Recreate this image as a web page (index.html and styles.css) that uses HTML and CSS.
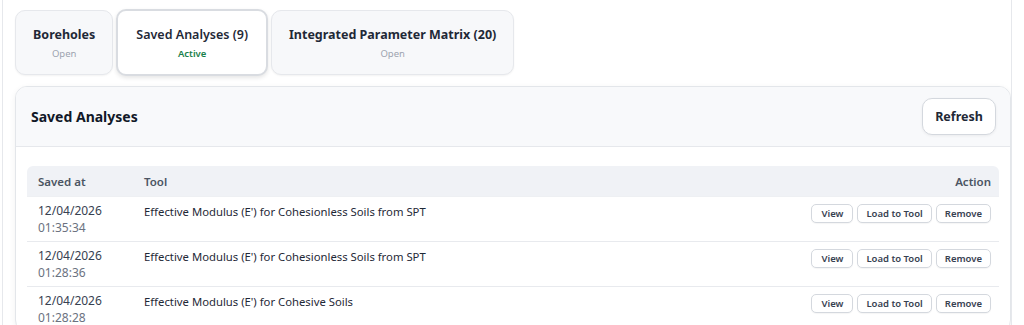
FILE: index.html
```html
<!DOCTYPE html>
<html>
<head>
<meta charset="utf-8">
<link rel="stylesheet" href="styles.css">
</head>
<body>
<div class="frame">
  <div class="tabs">
    <div class="tab">
      <div class="tab-title">Boreholes</div>
      <div class="tab-sub">Open</div>
    </div>
    <div class="tab active">
      <div class="tab-title">Saved Analyses (9)</div>
      <div class="tab-sub">Active</div>
    </div>
    <div class="tab">
      <div class="tab-title">Integrated Parameter Matrix (20)</div>
      <div class="tab-sub">Open</div>
    </div>
  </div>

  <div class="card">
    <div class="card-header">
      <h2 class="card-title">Saved Analyses</h2>
      <button class="btn-refresh">Refresh</button>
    </div>
    <div class="card-body">
      <table class="table">
        <thead>
          <tr>
            <th class="col-date">Saved at</th>
            <th>Tool</th>
            <th class="col-action">Action</th>
          </tr>
        </thead>
        <tbody>
          <tr>
            <td class="col-date"><div class="date">12/04/2026</div><div class="time">01:35:34</div></td>
            <td class="tool">Effective Modulus (E') for Cohesionless Soils from SPT</td>
            <td class="col-action"><div class="actions"><button class="btn-sm btn-view">View</button><button class="btn-sm">Load to Tool</button><button class="btn-sm">Remove</button></div></td>
          </tr>
          <tr>
            <td class="col-date"><div class="date">12/04/2026</div><div class="time">01:28:36</div></td>
            <td class="tool">Effective Modulus (E') for Cohesionless Soils from SPT</td>
            <td class="col-action"><div class="actions"><button class="btn-sm btn-view">View</button><button class="btn-sm">Load to Tool</button><button class="btn-sm">Remove</button></div></td>
          </tr>
          <tr>
            <td class="col-date"><div class="date">12/04/2026</div><div class="time">01:28:28</div></td>
            <td class="tool">Effective Modulus (E') for Cohesive Soils</td>
            <td class="col-action"><div class="actions"><button class="btn-sm btn-view">View</button><button class="btn-sm">Load to Tool</button><button class="btn-sm">Remove</button></div></td>
          </tr>
        </tbody>
      </table>
    </div>
  </div>
</div>
</body>
</html>
```
FILE: styles.css
```css
* { box-sizing: border-box; }
html, body {
  margin: 0;
  padding: 0;
  background: #ffffff;
  font-family: "Noto Sans", "Open Sans", sans-serif;
  color: #1f2937;
}
.frame {
  margin-left: 2px;
  width: 1010px;
  height: 325px;
  border-left: 1px solid #e6e8ec;
  border-right: 1px solid #e6e8ec;
  padding: 10px 0 0 12px;
  overflow: hidden;
}
.tabs {
  display: flex;
  gap: 3px;
  align-items: center;
  height: 65px;
}
.tab {
  height: 65px;
  padding: 0 17px;
  background: #f7f8fa;
  border: 1px solid #e6e8ec;
  border-radius: 10px;
  display: flex;
  flex-direction: column;
  align-items: center;
  justify-content: center;
  gap: 5px;
  box-shadow: 0 1px 2px rgba(0,0,0,0.05);
}
.tab.active {
  height: 67px;
  padding: 0 18px;
  background: #ffffff;
  border: 2px solid #d9dce1;
  box-shadow: 0 2px 4px rgba(0,0,0,0.10);
}
.tab-title {
  font-size: 12.5px;
  font-weight: 700;
  color: #1f2937;
  line-height: 17px;
}
.tab.active .tab-title { font-weight: 600; }
.tab-sub {
  font-size: 9.5px;
  color: #9ca3af;
  line-height: 12px;
}
.tab.active .tab-sub { color: #1a7f4b; font-weight: 600; }

.card {
  margin-top: 11px;
  width: 996px;
  border: 1px solid #e3e6ea;
  border-radius: 12px;
  box-shadow: 0 2px 6px rgba(0,0,0,0.06);
  background: #ffffff;
  overflow: hidden;
}
.card-header {
  height: 60px;
  background: #f8f9fb;
  border-bottom: 1px solid #e6e8ec;
  display: flex;
  align-items: center;
  justify-content: space-between;
  padding: 0 14px 0 15px;
}
.card-title {
  margin: 0;
  font-size: 14px;
  font-weight: 700;
  color: #111827;
}
.btn-refresh {
  height: 37px;
  width: 74px;
  margin-top: -1px;
  background: #ffffff;
  border: 1px solid #d4d8de;
  border-radius: 10px;
  font-family: inherit;
  font-size: 12.5px;
  font-weight: 700;
  color: #1f2937;
  box-shadow: 0 1px 3px rgba(0,0,0,0.06);
}
.card-body {
  padding: 19px 11px 0 11px;
}
.table {
  width: 100%;
  border-collapse: separate;
  border-spacing: 0;
  font-size: 11.5px;
}
.table thead th {
  height: 30px;
  background: #f0f2f6;
  text-align: left;
  font-weight: 600;
  color: #4b5563;
  padding: 0 8px 0 11px;
}
.table thead th:first-child { border-top-left-radius: 6px; }
.table thead th:last-child { border-top-right-radius: 6px; }
.table th.col-action, .table td.col-action { text-align: right; }
.col-date { width: 106px; }
.table tbody td {
  height: 45px;
  border-top: 1px solid #e8eaee;
  vertical-align: top;
  padding: 6px 8px 0 11px;
  color: #1f2937;
}
.table tbody td.col-action { padding-right: 8px; }
.table tbody tr:first-child td { border-top: 1px solid #eef0f3; }
.date { font-size: 12px; line-height: 16px; color: #374151; }
.time { font-size: 12px; line-height: 17px; color: #6b7280; }
.tool { padding-top: 8px !important; line-height: 14px; color: #1f2937; font-size: 11.3px; }
.actions {
  display: flex;
  justify-content: flex-end;
  gap: 4px;
  padding-top: 1px;
}
.btn-sm {
  height: 19px;
  padding: 0 8px;
  background: #ffffff;
  border: 1px solid #d4d8de;
  border-radius: 5px;
  font-family: inherit;
  font-size: 9.5px;
  font-weight: 600;
  color: #374151;
  box-shadow: 0 1px 1px rgba(0,0,0,0.04);
}
.btn-view { padding: 0 9px; }
```
